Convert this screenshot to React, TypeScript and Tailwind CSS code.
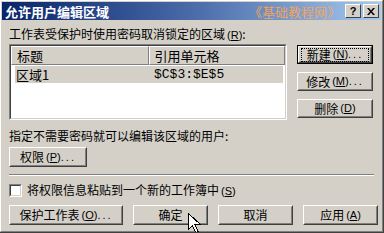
import type { ReactNode } from "react";

const cjk = { fontFamily: '"Noto Sans CJK SC", "Liberation Sans", sans-serif' };

// classic win2k raised button
function Btn({
  children,
  w,
  h = "h-[20px]",
  isDefault = false,
}: {
  children: ReactNode;
  w: string;
  h?: string;
  isDefault?: boolean;
}) {
  return (
    <div className={`${w} ${h} shrink-0 ${isDefault ? "border border-black" : ""}`}>
      <div className="flex h-full w-full border border-t-white border-l-white border-r-[#404040] border-b-[#404040]">
        <div className="flex h-full w-full items-center justify-center border border-transparent border-r-[#808080] border-b-[#808080] text-[12px] leading-none text-black">
          {isDefault ? (
            <span className="mx-[2px] flex h-[12px] w-full items-center justify-center outline outline-1 outline-offset-0 outline-dotted outline-black">
              {children}
            </span>
          ) : (
            children
          )}
        </div>
      </div>
    </div>
  );
}

function Key({ k }: { k: string }) {
  return (
    <span className="ml-[2px] font-['Liberation_Sans',sans-serif] text-[11px]">
      (<span className="underline">{k}</span>)
    </span>
  );
}

function Dots() {
  return <span className="tracking-[2px] font-['Liberation_Sans',sans-serif] text-[11px]">...</span>;
}

export default function App() {
  return (
    <div
      className="relative h-[233px] w-[384px] overflow-hidden border-r border-b border-r-[#404040] border-b-[#404040] bg-[#d4d0c8]"
      style={cjk}
    >
      <div className="h-full w-full border-l border-t border-r border-b border-l-white border-t-white border-r-[#808080] border-b-[#808080] px-[1px] pt-[1px]">
        {/* title bar */}
        <div className="flex h-[18px] items-center bg-gradient-to-r from-[#0a246a] via-[#4a6aa8] to-[#a6caf0] pl-[3px] pr-[2px]">
          <span className="text-[13px] font-bold leading-none text-white">允许用户编辑区域</span>
          <span className="ml-auto mr-[5px] text-[13px] leading-none text-[#ffa64d] opacity-90">
            《基础教程网》
          </span>
          <div className="flex gap-[2px]">
            <div className="flex h-[14px] w-[16px] items-center justify-center border border-t-white border-l-white border-r-[#404040] border-b-[#404040] bg-[#d4d0c8] font-['Liberation_Sans',sans-serif] text-[11px] font-bold leading-none text-black">
              ?
            </div>
            <div className="flex h-[14px] w-[16px] items-center justify-center border border-t-white border-l-white border-r-[#404040] border-b-[#404040] bg-[#d4d0c8]">
              <svg width="8" height="7" viewBox="0 0 8 7">
                <path d="M0 0h2l2 2.5L6 0h2L5 3.5 8 7H6L4 4.5 2 7H0l3-3.5z" fill="black" />
              </svg>
            </div>
          </div>
        </div>

        <div className="pl-[7px] pr-[6px]">
          <div className="mt-[8px] h-[12px] text-[12px] leading-[12px] text-black">
            工作表受保护时使用密码取消锁定的区域<Key k="R" />:
          </div>

          <div className="mt-[4px] flex">
            {/* list box */}
            <div className="h-[76px] w-[278px] border border-t-[#808080] border-l-[#808080] border-r-white border-b-white">
              <div className="h-full w-full border border-t-[#404040] border-l-[#404040] border-r-[#d4d0c8] border-b-[#d4d0c8] bg-white">
                <div className="flex h-[19px] text-[13px] leading-[13px] text-black">
                  <div className="flex w-[138px] items-center border border-t-white border-l-white border-r-[#808080] border-b-[#808080] bg-[#d4d0c8] pl-[5px]">
                    标题
                  </div>
                  <div className="flex w-[137px] items-center border border-t-white border-l-white border-r-[#808080] border-b-[#808080] bg-[#d4d0c8] pl-[5px]">
                    引用单元格
                  </div>
                </div>
                <div className="ml-[4px] mr-[2px] mt-[1px] flex h-[17px] items-center bg-[#d4d0c8] text-[13px] leading-[13px] text-black">
                  <span className="w-[139px] pl-[1px]">区域1</span>
                  <span className="font-['Liberation_Mono',monospace] text-[13px]">$C$3:$E$5</span>
                </div>
              </div>
            </div>

            {/* side buttons */}
            <div className="ml-[10px] mt-[1px] flex flex-col gap-[8px]">
              <Btn w="w-[76px]" h="h-[19px]" isDefault>
                新建<Key k="N" />
                <Dots />
              </Btn>
              <Btn w="w-[76px]" h="h-[19px]">
                修改<Key k="M" />
                <Dots />
              </Btn>
              <Btn w="w-[76px]" h="h-[19px]">
                删除<Key k="D" />
              </Btn>
            </div>
          </div>

          <div className="mt-[10px] h-[12px] text-[12px] leading-[12px] text-black">
            指定不需要密码就可以编辑该区域的用户:
          </div>

          <div className="mt-[5px]">
            <Btn w="w-[78px]">
              权限<Key k="P" />
              <Dots />
            </Btn>
          </div>

          <div className="mt-[7px] mr-[1px] h-[2px] border-t border-b border-t-[#808080] border-b-white" />

          <div className="mt-[8px] flex items-center gap-[5px]">
            <div className="h-[13px] w-[13px] border border-t-[#808080] border-l-[#808080] border-r-white border-b-white">
              <div className="h-full w-full border border-t-[#404040] border-l-[#404040] border-r-[#d4d0c8] border-b-[#d4d0c8] bg-white" />
            </div>
            <span className="text-[12px] leading-none text-black">
              将权限信息粘贴到一个新的工作簿中<Key k="S" />
            </span>
          </div>

          <div className="mt-[8px] flex gap-[10px]">
            <Btn w="w-[114px]">
              保护工作表<Key k="O" />
              <Dots />
            </Btn>
            <Btn w="w-[75px]">确定</Btn>
            <Btn w="w-[75px]">取消</Btn>
            <Btn w="w-[75px]">
              应用<Key k="A" />
            </Btn>
          </div>
        </div>
      </div>

      {/* mouse cursor */}
      <svg className="absolute left-[188px] top-[213px]" width="13" height="21" viewBox="0 0 13 21">
        <path
          d="M0.5 0.5v16l4-4 3 7 2.5-1-3-7h5.5z"
          fill="white"
          stroke="black"
          strokeWidth="1"
          shapeRendering="crispEdges"
        />
      </svg>
    </div>
  );
}
